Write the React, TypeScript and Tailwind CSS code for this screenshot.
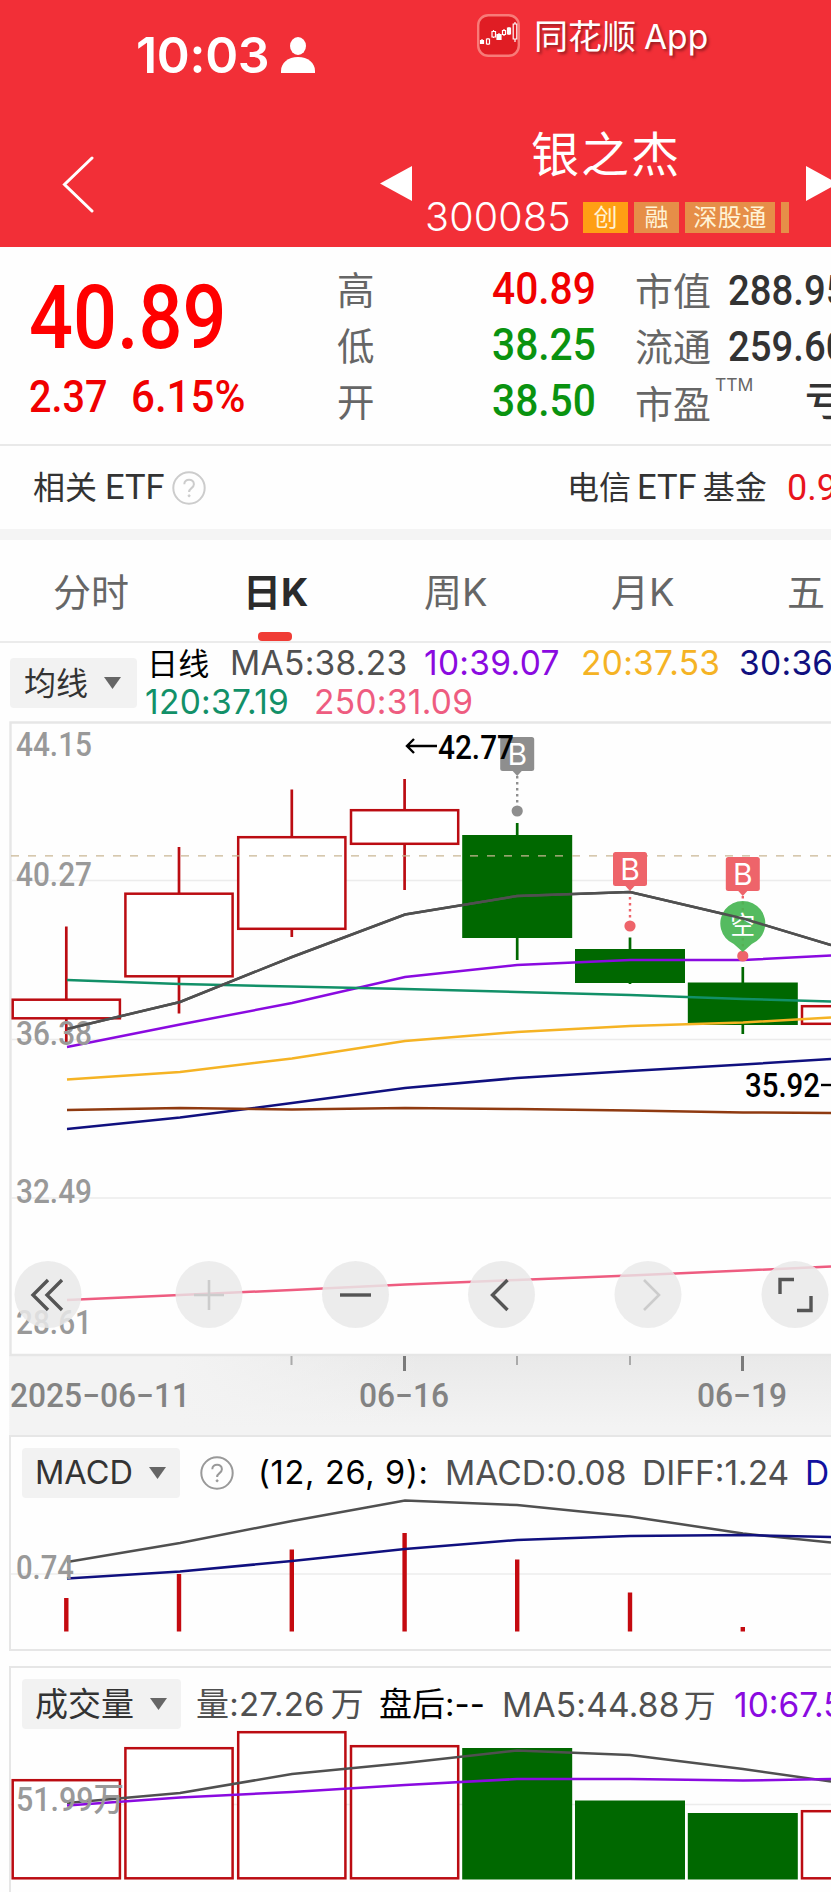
import React from "react";

const DIN = "font-['Roboto','Noto_Sans_CJK_SC',sans-serif] font-medium";
const LINE_X = [67, 180, 292, 405, 517, 630, 743, 831];

type Candle = { x: number; top: number; bottom: number; high: number; low: number; up: boolean };

const candles: Candle[] = [
  { x: 66.3, top: 998.5, bottom: 1019.5, high: 926.5, low: 1042, up: true },
  { x: 179, top: 892.5, bottom: 977.5, high: 847, low: 1013.5, up: true },
  { x: 291.8, top: 836, bottom: 930, high: 789.5, low: 937, up: true },
  { x: 404.6, top: 809, bottom: 845, high: 779, low: 890, up: true },
  { x: 517.2, top: 835, bottom: 938, high: 823, low: 960, up: false },
  { x: 630, top: 949, bottom: 983, high: 937.5, low: 984, up: false },
  { x: 742.8, top: 982.5, bottom: 1025, high: 967, low: 1034, up: false },
  { x: 855.6, top: 1005, bottom: 1025, high: 1005, low: 1025, up: true },
];

const maLines = [
  { color: "#505050", y: [1029, 1002, 957, 914.5, 896, 892, 918.5, 945] },
  { color: "#8a0ae0", y: [1047, 1024.5, 1003, 977, 965, 960, 960, 955.5] },
  { color: "#f5b324", y: [1079.5, 1072, 1058.5, 1041, 1032, 1026, 1022.5, 1017.5] },
  { color: "#10107f", y: [1129, 1117.5, 1103, 1088, 1078, 1071, 1064.5, 1059] },
  { color: "#129068", y: [980, 984, 986.5, 989, 992, 995, 999, 1001.5] },
  { color: "#8f3a10", y: [1110, 1108, 1109.5, 1108, 1109, 1110.5, 1112.5, 1113] },
  { color: "#ee5c80", y: [1300, 1295, 1290, 1284.5, 1280, 1275.5, 1270.5, 1266.5] },
];

const macdBars = [1598, 1574, 1549.5, 1533, 1559.5, 1592.5, 1627];
const volumeTops = [1779, 1747, 1731, 1745, 1748, 1800.5, 1813, 1810];

const toPoints = (y: number[]) => y.map((v, i) => `${LINE_X[i]},${v}`).join(" ");

const Line: React.FC<{ y: number[]; color: string }> = ({ y, color }) => (
  <polyline points={toPoints(y)} fill="none" stroke={color} strokeWidth="2.5" />
);

const Label: React.FC<{ x: number; y: number; w: number; color?: string; children: string }> = ({
  x,
  y,
  w,
  color = "#999",
  children,
}) => (
  <text x={x} y={y + 0.7} fill={color} fontSize="32.5" textLength={w} lengthAdjust="spacingAndGlyphs" className={DIN}>
    {children}
  </text>
);

const Box: React.FC<{ x: number; top: number; bottom: number; up: boolean }> = ({ x, top, bottom, up }) =>
  up ? (
    <rect x={x - 53.6} y={top + 1.2} width="107.2" height={bottom - top - 2.4} fill="#fff" stroke="#bb0c12" strokeWidth="2.5" />
  ) : (
    <rect x={x - 55} y={top} width="110" height={bottom - top} fill="#006800" />
  );

const Flag: React.FC<{ x: number; y: number; color: string; dot: number }> = ({ x, y, color, dot }) => (
  <g>
    <line x1={x} x2={x} y1={y + 39} y2={dot - 8} stroke={color} strokeWidth="2.4" strokeDasharray="2.5 3.5" />
    <circle cx={x} cy={dot} r="5.6" fill={color} />
    <rect x={x - 17} y={y} width="34" height="34" rx="2.5" fill={color} />
    <path d={`M${x - 5} ${y + 33.5}h10l-5 5.5z`} fill={color} />
    <text x={x} y={y + 28} textAnchor="middle" fontSize="30" fill="#fff" className="font-['Inter',sans-serif]">
      B
    </text>
  </g>
);

const Help: React.FC<{ color: string }> = ({ color }) => (
  <svg className="size-[34px] shrink-0" viewBox="0 0 34 34" fill="none" stroke={color}>
    <circle cx="17" cy="17" r="15.7" strokeWidth="2" />
    <path d="M12.3 13.2c0-6 9.6-6 9.6 0 0 4-4.8 3.8-4.8 7.8" strokeWidth="2" />
    <circle cx="17.1" cy="24.8" r="1" strokeWidth="1" fill={color} />
  </svg>
);

const Dropdown: React.FC<{ text: string; className: string }> = ({ text, className }) => (
  <button type="button" className={`flex h-[50px] shrink-0 items-center justify-between rounded bg-[#f2f2f2] text-[#333] ${className}`}>
    <span className="pt-0.5 whitespace-nowrap">{text}</span>
    <svg className="h-3 w-[17px]" viewBox="0 0 17 12">
      <path d="M0 0h17L8.5 12z" fill="#666" />
    </svg>
  </button>
);

const Round: React.FC<{ x: number; d: string; faded?: boolean }> = ({ x, d, faded }) => (
  <g>
    <circle cx={x} cy="1294.5" r="33.5" fill="#e9e9e9" fillOpacity={faded ? 0.8 : 0.85} />
    <path d={d} transform={`translate(${x} 1295)`} fill="none" stroke={faded ? "#ccc" : "#555"} strokeWidth={faded ? 2.6 : 3.4} />
  </g>
);

const Header: React.FC = () => (
  <header className="h-[247px] bg-[#f22f37] text-white">
    <div className="flex h-[120px] items-start">
      <div className="ml-[136px] mt-[30px] flex w-[341px] items-center">
        <span className="w-[145px] text-[50px] leading-[50px] font-semibold tracking-[-0.3px]">10:03</span>
        <svg className="h-9 w-[34px]" viewBox="0 0 34 36" fill="#fff">
          <ellipse cx="17" cy="9" rx="8" ry="9" />
          <path d="M0 36v-2c0-8 7-14 17-14s17 6 17 14v2z" />
        </svg>
      </div>
      <svg className="mt-3.5 size-[43px]" viewBox="0 0 43 43">
        <rect x="1.2" y="1.2" width="40.6" height="40.6" rx="10" fill="#e01d24" stroke="#f87b78" strokeWidth="2.4" />
        <g stroke="#fff" strokeWidth="1.2" fill="none">
          <path d="M5 25v5M11 24v7M16.5 16v8M22 19v7M27 15v7M32 13v8M38 8v20" />
          <path d="M3.5 26.5h3v3h-3zM20 20.5h4v5h-4zM30.5 14h3v6h-3z" fill="#fff" />
          <path d="M9.5 25h3v5h-3zM15 17.5h3.5v5.5H15zM25.5 16.5h3v4h-3zM36.2 10h3.6v15h-3.6z" fill="#e01d24" />
        </g>
      </svg>
      <span className="ml-3.5 mt-[15px] text-[34px] leading-[44px] whitespace-nowrap [text-shadow:2px_2px_3px_#0006]">
        同花顺<span className="ml-[8px] text-[33.5px]">App</span>
      </span>
    </div>
    <div className="flex h-[127px] items-start">
      <svg className="ml-[61px] mt-9 h-[57px] w-[34px] shrink-0" viewBox="0 0 34 57" fill="none" stroke="#fff">
        <path d="M31 2L3.5 28.5 31 55" strokeWidth="3" strokeLinecap="round" />
      </svg>
      <svg className="ml-[285px] mt-[46px] h-[35px] w-8 shrink-0" viewBox="0 0 32 35">
        <path d="M32 0v35L0 17.5z" fill="#fff" />
      </svg>
      <div className="flex w-[394px] shrink-0 flex-col">
        <h1 className="ml-[119px] h-[73px] pt-[10px] text-[48px] leading-[50px] tracking-[2px]">银之杰</h1>
        <div className="ml-[13px] flex h-[48px] items-center">
          <span className="w-[158px] shrink-0 pt-px text-[39.5px] font-light tracking-[0.2px]">300085</span>
          <div className="flex gap-[6px] text-[24px] leading-[31px] text-[#fff3d6]">
            <span className="h-[31px] w-[45px] bg-[#ff9f14] text-center">创</span>
            <span className="h-[31px] w-[45px] bg-[#e68e48] text-center">融</span>
            <span className="h-[31px] w-[90px] bg-[#e68e48] text-center tracking-[0.5px]">深股通</span>
            <span className="h-[31px] w-2 bg-[#e68e48]" />
          </div>
        </div>
      </div>
      <svg className="mt-[46px] h-[35px] w-8 shrink-0" viewBox="0 0 32 35">
        <path d="M0 0v35l32-17.5z" fill="#fff" />
      </svg>
    </div>
  </header>
);

const Quote: React.FC = () => {
  const stats = [
    { name: "高", value: "40.89", color: "text-[#f00000]", name2: "市值", value2: "288.95" },
    { name: "低", value: "38.25", color: "text-[#0a9310]", name2: "流通", value2: "259.60" },
    { name: "开", value: "38.50", color: "text-[#0a9310]", name2: "市盈", value2: "亏损" },
  ];
  return (
    <section className="flex h-[199px] border-b-2 border-[#e9e9e9]">
      <div className="w-[337px] shrink-0 pl-[29px] text-[#f00000]">
        <div className={`${DIN} mt-[21px] h-[100px] origin-left scale-x-[0.875] text-[88.5px] leading-[100px] text-[#ff0000]`}>40.89</div>
        <div className={`${DIN} mt-[2px] flex text-[45px] leading-[54px]`}>
          <span className="w-[102px] origin-left scale-x-[0.88]">2.37</span>
          <span className="origin-left scale-x-[0.935]">6.15%</span>
        </div>
      </div>
      <div className="shrink-0 pt-[14px]">
        {stats.map(s => (
          <div key={s.name} className="flex h-14 items-center whitespace-nowrap text-[#666]">
            <span className="w-[155px] pt-1 text-[37.5px]">{s.name}</span>
            <span className={`${DIN} w-[143px] origin-left scale-x-[0.905] text-[45px] ${s.color}`}>{s.value}</span>
            <span className="flex w-[93px] pt-1 text-[38px]">
              {s.name2 === "市盈" ? <span className="pt-[3px]">{s.name2}</span> : s.name2}
              {s.name2 === "市盈" && <sup className="top-0 ml-1 pt-px text-[17.5px] leading-[22px]">TTM</sup>}
            </span>
            {s.name2 === "市盈" ? (
              <span className="ml-[77px] text-[39px] font-medium text-[#333]">{s.value2}</span>
            ) : (
              <span className={`${DIN} origin-left scale-x-[0.89] pt-0.5 text-[43px] text-[#333]`}>{s.value2}</span>
            )}
          </div>
        ))}
      </div>
    </section>
  );
};

const App: React.FC = () => (
  <div className="h-[1892px] w-full overflow-hidden bg-[#fefefe] font-['Inter','Noto_Sans_CJK_SC',sans-serif]">
    <Header />
    <Quote />

    <section className="flex h-[83px] items-center text-[32px] whitespace-nowrap text-[#333]">
      <span className="ml-[33px] w-[139px] shrink-0">
        相关<span className="ml-2 font-['Roboto'] text-[34.5px]">ETF</span>
      </span>
      <Help color="#ccc" />
      <span className="ml-[361px] w-[220px] shrink-0">
        电信<span className="mx-[6px] font-['Roboto'] text-[34.5px]">ETF</span>基金
      </span>
      <span className="font-['Roboto'] text-[36px] text-[#e8141c]">0.9</span>
    </section>

    <div className="h-[11px] bg-[#f4f4f4]" />

    <nav className="flex h-[103px] items-center border-b-2 border-[#ebebeb] pt-1 pl-[53px] text-[38px] whitespace-nowrap text-[#666]">
      <a className="w-[190px] shrink-0">分时</a>
      <a className="relative w-[181px] shrink-0 font-bold text-[#2b2b2b]">
        日K
        <i className="absolute top-[68px] left-[15px] h-[9px] w-[34px] rounded-[4px] bg-[#f03c35]" />
      </a>
      <a className="w-[187px] shrink-0">周K</a>
      <a className="w-[176px] shrink-0">月K</a>
      <a>五</a>
    </nav>

    <section className="flex h-[77px] items-center pt-[3px]">
      <Dropdown text="均线" className="ml-2.5 w-[127px] pr-4 pl-3.5 text-[32px]" />
      <div className="ml-2 text-[33.5px] leading-[39px] tracking-[0.3px] whitespace-nowrap">
        <div className="flex">
          <span className="w-[85px] pl-0.5 text-[31px] text-black">日线</span>
          <span className="w-[194px] text-[#505050]">MA5:38.23</span>
          <span className="w-[157px] text-[#8a0ae0]">10:39.07</span>
          <span className="w-[158px] text-[#f5b324]">20:37.53</span>
          <span className="text-[#10107f]">30:36.10</span>
        </div>
        <div className="flex">
          <span className="w-[169px] text-[#129068]">120:37.19</span>
          <span className="text-[#ee5c80]">250:31.09</span>
        </div>
      </div>
    </section>

    {/* K line */}
    <svg className="block h-[715px] w-[831px]" viewBox="0 720 831 715">
      <defs>
        <linearGradient id="axis" x1="0" x2="0" y1="0" y2="1">
          <stop offset="0" stopColor="#e9e9e9" />
          <stop offset="0.9" stopColor="#f3f3f3" />
        </linearGradient>
        <linearGradient id="fade">
          <stop offset="0.2" stopColor="#f3f3f3" />
          <stop offset="0.5" stopColor="#f3f3f3" stopOpacity="0" />
        </linearGradient>
      </defs>
      <rect x="9.5" y="1355" width="822" height="80" fill="url(#axis)" />
      <rect x="9.5" y="1355" width="822" height="80" fill="url(#fade)" />
      <path d="M840 722.5H10.5V1355H840" fill="none" stroke="#e6e6e6" strokeWidth="2.4" />
      <path d="M11 880.5H831M11 1039.5H831M11 1198H831" stroke="#ececec" strokeWidth="1.6" />
      {candles.map(c => (
        <g key={c.x}>
          <line x1={c.x} x2={c.x} y1={c.high} y2={c.low} stroke={c.up ? "#bb0c12" : "#006800"} strokeWidth="2.7" />
          <Box x={c.x} top={c.top} bottom={c.bottom} up={c.up} />
        </g>
      ))}
      <path d="M11 855.9H831" stroke="#c9b694" strokeWidth="1.4" strokeDasharray="8 9" />
      {maLines.map(l => (
        <Line key={l.color} {...l} />
      ))}

      <Label x={16} y={755} w={76}>44.15</Label>
      <Label x={16} y={885.5} w={76}>40.27</Label>
      <Label x={16} y={1044} w={76}>36.38</Label>
      <Label x={16} y={1202.5} w={76}>32.49</Label>
      <Label x={16} y={1333} w={76}>28.61</Label>

      <Flag x={517.2} y={737} color="#8e8e8e" dot={811} />
      <Flag x={630} y={852} color="#ee646a" dot={926} />
      <Flag x={742.8} y={857} color="#ee646a" dot={956} />
      <path d="M742.8 952l-9-8a22.5 22.5 0 1 1 18 0z" fill="#46b552" fillOpacity="0.92" />
      <text x="742.8" y="934" textAnchor="middle" fontSize="25" fill="#fff" className="font-['Noto_Sans_CJK_SC']">空</text>
      <Line color="#505050" y={maLines[0].y} />

      <path d="M437 746H407m7-7l-7 7 7 7" fill="none" stroke="#000" strokeWidth="2.4" />
      <Label x={438} y={758} w={76} color="#000">42.77</Label>
      <Label x={745} y={1096} w={75} color="#000">35.92</Label>
      <path d="M821 1085h10" stroke="#000" strokeWidth="2.4" />

      <Round x={48} d="M0-15L-15 0 0 15M14-15L-1 0 14 15" />
      <Round x={209} d="M-15 0H15M0-15V15" faded />
      <Round x={355.5} d="M-15.5 0H15.5" />
      <Round x={501.5} d="M6-15L-9 0 6 15" />
      <Round x={648} d="M-4-15L11 0-4 15" faded />
      <Round x={795} d="M-15-1V-15.5H-1M16 1V15.5H2" />

      <path d="M291.5 1356v9M517 1356v9M630 1356v9" stroke="#aaa" strokeWidth="2" />
      <path d="M404.5 1356v15M742.5 1356v15" stroke="#7a7a7a" strokeWidth="3" />
      <Label x={10} y={1406} w={180} color="#838383">2025−06−11</Label>
      <Label x={359} y={1406} w={90} color="#838383">06−16</Label>
      <Label x={697} y={1406} w={90} color="#838383">06−19</Label>
    </svg>

    {/* MACD */}
    <section className="ml-[9px] h-[216px] border-y-2 border-l-2 border-[#e6e6e6]">
      <div className="flex h-[61px] items-center pt-[10px] text-[33.5px] whitespace-nowrap">
        <Dropdown text="MACD" className="ml-[11px] w-[158px] pr-3.5 pl-[13px] text-[32.5px]" />
        <span className="ml-5 w-[58px] shrink-0">
          <Help color="#999" />
        </span>
        <span className="w-[187px] shrink-0 pt-0.5 text-[32.5px] tracking-[0.7px] text-black">(12, 26, 9):</span>
        <span className="w-[197px] shrink-0 pt-0.5 text-[#505050]">MACD:0.08</span>
        <span className="w-[163px] shrink-0 pt-0.5 text-[#505050]">DIFF:1.24</span>
        <span className="pt-0.5 text-[#10109f]">DEA:1.20</span>
      </div>
      <svg className="block h-[150px] w-[820px]" viewBox="11 1498 820 150">
        <path d="M11 1574H831" stroke="#ececec" strokeWidth="1.6" />
        {macdBars.map((top, i) => (
          <rect key={i} x={candles[i].x - 2.2} y={top} width="4.4" height={1631.5 - top} fill="#c40a10" />
        ))}
        <Line color="#505050" y={[1562, 1543, 1521, 1500.5, 1505, 1516.5, 1533.5, 1542.5]} />
        <Line color="#10107f" y={[1578.5, 1571.5, 1561, 1549, 1540, 1536, 1535, 1537]} />
        <Label x={16} y={1578} w={58}>0.74</Label>
      </svg>
    </section>

    {/* volume */}
    <section className="mt-[15px] ml-[9px] border-t-2 border-l-2 border-[#e6e6e6]">
      <div className="flex h-[62px] items-center pt-[10px] text-[33.5px] whitespace-nowrap">
        <Dropdown text="成交量" className="ml-[11px] w-[159px] pr-3.5 pl-[13px] text-[33px]" />
        <span className="ml-[15px] w-[183px] shrink-0 pt-0.5 text-[33px] tracking-[0.2px] text-[#505050]">
          量:27.26<span className="ml-1.5">万</span>
        </span>
        <span className="w-[123px] shrink-0 pt-0.5 text-[33px] text-black">盘后:--</span>
        <span className="w-[232px] shrink-0 pt-0.5 tracking-[0.2px] text-[#505050]">
          MA5:44.88<span className="ml-1 text-[32px]">万</span>
        </span>
        <span className="pt-0.5 text-[#8a0ae0]">10:67.57</span>
      </div>
      <svg className="block h-[162px] w-[820px]" viewBox="11 1730 820 162">
        <path d="M11 1804.5H831" stroke="#ececec" strokeWidth="1.6" />
        {candles.map((c, i) => (
          <Box key={c.x} x={c.x} top={volumeTops[i]} bottom={1879.5} up={c.up} />
        ))}
        <Line color="#505050" y={[1803, 1793, 1774, 1763, 1750.5, 1755, 1769, 1781.5]} />
        <Line color="#8a0ae0" y={[1805.5, 1797.5, 1792, 1785, 1779, 1779, 1780.5, 1779]} />
        <Label x={16} y={1810} w={108}>51.99万</Label>
      </svg>
    </section>
  </div>
);

export default App;
